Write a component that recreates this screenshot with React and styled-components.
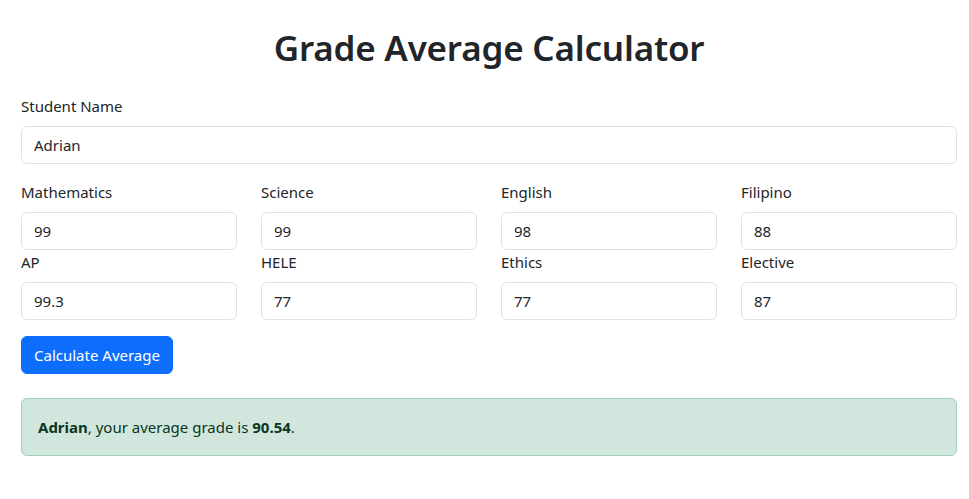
import React, { useState } from "react";
import styled, { createGlobalStyle } from "styled-components";

const GlobalStyle = createGlobalStyle`
  *, *::before, *::after { box-sizing: border-box; }
  body {
    margin: 0;
    font-family: "Noto Sans", "Open Sans", sans-serif;
    font-size: 15px;
    line-height: 24px;
    color: #212529;
    background: #fff;
  }
`;

const Page = styled.div`
  padding: 26px 12px 0 21px;
`;

const Title = styled.h1`
  margin: 0 0 24px;
  text-align: center;
  font-size: 35px;
  font-weight: 600;
  letter-spacing: -0.2px;
  line-height: 44px;
`;

const Field = styled.div`
  margin-bottom: ${(p) => (p.$flush ? "0" : "16px")};
`;

const Label = styled.label`
  display: block;
  margin-bottom: 8px;
`;

const Input = styled.input`
  display: block;
  width: 100%;
  height: 38px;
  padding: 6px 12px;
  font: inherit;
  color: #212529;
  border: 1px solid #dee2e6;
  border-radius: 6px;
  background: #fff;
  outline: none;
`;

const GradeGrid = styled.div`
  display: grid;
  grid-template-columns: repeat(4, 1fr);
  column-gap: 24px;
  margin-bottom: 16px;
`;

const Button = styled.button`
  display: inline-block;
  height: 38px;
  padding: 6px 12px;
  font: inherit;
  color: #fff;
  background: #0d6efd;
  border: 1px solid #0d6efd;
  border-radius: 6px;
  cursor: pointer;
`;

const Alert = styled.div`
  margin-top: 24px;
  padding: 16px;
  color: #0a3622;
  background: #d1e7dd;
  border: 1px solid #a3cfbb;
  border-radius: 6px;
`;

const subjects = [
  ["Mathematics", "99"],
  ["Science", "99"],
  ["English", "98"],
  ["Filipino", "88"],
  ["AP", "99.3"],
  ["HELE", "77"],
  ["Ethics", "77"],
  ["Elective", "87"],
];

export default function App() {
  const [name, setName] = useState("Adrian");
  const [grades, setGrades] = useState(subjects.map((s) => s[1]));
  const [result, setResult] = useState({ name: "Adrian", avg: "90.54" });

  const calculate = () => {
    const nums = grades.map(Number);
    const avg = nums.reduce((a, b) => a + b, 0) / nums.length;
    setResult({ name, avg: avg.toFixed(2) });
  };

  return (
    <>
      <GlobalStyle />
      <Page>
        <Title>Grade Average Calculator</Title>
        <Field>
          <Label>Student Name</Label>
          <Input value={name} onChange={(e) => setName(e.target.value)} />
        </Field>
        <GradeGrid>
          {subjects.map(([label], i) => (
            <Field key={label} $flush>
              <Label>{label}</Label>
              <Input
                value={grades[i]}
                onChange={(e) => {
                  const next = [...grades];
                  next[i] = e.target.value;
                  setGrades(next);
                }}
              />
            </Field>
          ))}
        </GradeGrid>
        <Button onClick={calculate}>Calculate Average</Button>
        {result && (
          <Alert>
            <strong>{result.name}</strong>, your average grade is{" "}
            <strong>{result.avg}</strong>.
          </Alert>
        )}
      </Page>
    </>
  );
}
